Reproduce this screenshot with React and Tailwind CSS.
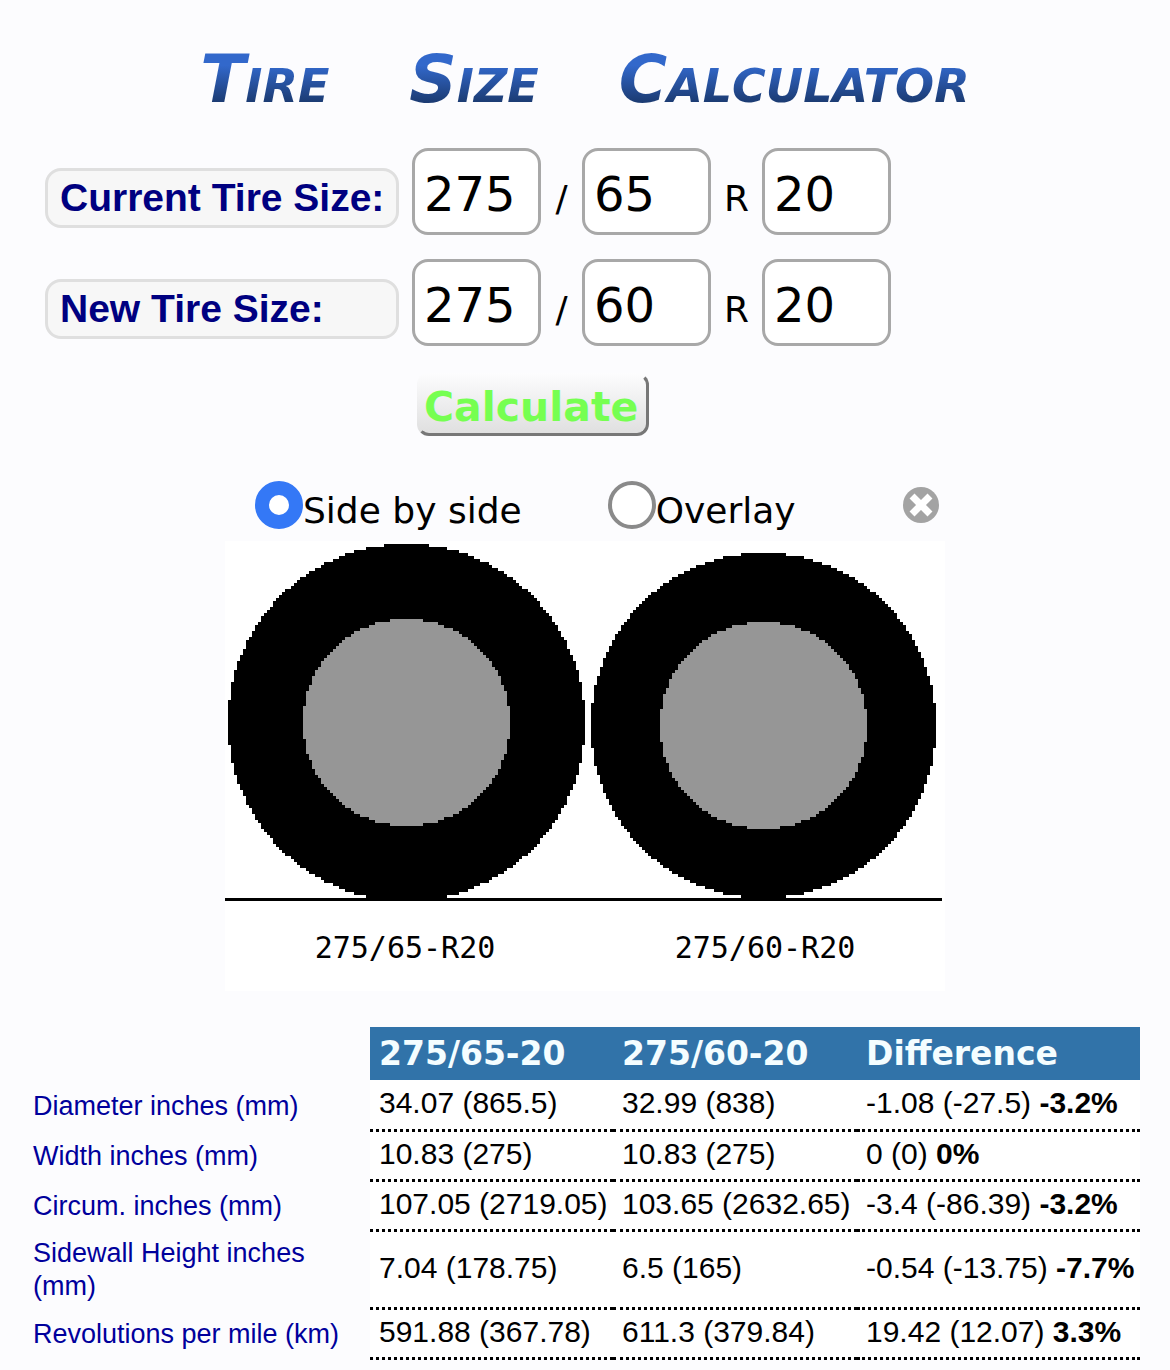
import React, { useState } from 'react';

const SIZES = [
  { id: 'current', label: 'Current Tire Size:', width: '275', ratio: '65', rim: '20' },
  { id: 'new', label: 'New Tire Size:', width: '275', ratio: '60', rim: '20' },
];

const ROWS = [
  { label: 'Diameter inches (mm)', a: '34.07 (865.5)', b: '32.99 (838)', diff: '-1.08 (-27.5)', pct: '-3.2%' },
  { label: 'Width inches (mm)', a: '10.83 (275)', b: '10.83 (275)', diff: '0 (0)', pct: '0%' },
  { label: 'Circum. inches (mm)', a: '107.05 (2719.05)', b: '103.65 (2632.65)', diff: '-3.4 (-86.39)', pct: '-3.2%' },
  { label: 'Sidewall Height inches (mm)', a: '7.04 (178.75)', b: '6.5 (165)', diff: '-0.54 (-13.75)', pct: '-7.7%' },
  { label: 'Revolutions per mile (km)', a: '591.88 (367.78)', b: '611.3 (379.84)', diff: '19.42 (12.07)', pct: '3.3%' },
];

// Scanline circle on a whole-unit grid, gives the stepped edge
function discPath(cx, cy, r) {
  const limit = (r + 0.5) * (r + 0.5);
  let d = '';
  for (let dy = -r; dy <= r; dy++) {
    const half = Math.floor(Math.sqrt(limit - dy * dy));
    d += `M${cx - half} ${cy + dy}h${half * 2 + 1}v1h${-(half * 2 + 1)}z`;
  }
  return d;
}

function Tire({ cx, cy, r, rim }) {
  return (
    <g shapeRendering="crispEdges">
      <path d={discPath(cx, cy, r)} fill="#000" />
      <path d={discPath(cx, cy, rim)} fill="#969696" />
    </g>
  );
}

function TireDrawing({ overlay }) {
  return (
    <svg viewBox="0 0 240 150" className="block w-full bg-white" role="img" aria-label="Tire comparison">
      <Tire cx={overlay ? 120 : 60} cy={60} r={59} rim={34} />
      <g opacity={overlay ? 0.6 : 1}>
        <Tire cx={overlay ? 120 : 179} cy={61} r={57} rim={34} />
      </g>
      <rect x="0" y="119" width="239" height="1" fill="#000" shapeRendering="crispEdges" />
      <g fontSize="10" textAnchor="middle" className="font-['DejaVu_Sans_Mono',monospace]">
        <text x="60" y="139">275/65-R20</text>
        <text x="180" y="139">275/60-R20</text>
      </g>
    </svg>
  );
}

function SizeInput({ label, value }) {
  return (
    <input
      type="text"
      inputMode="numeric"
      aria-label={label}
      defaultValue={value}
      className="h-[87px] w-[129px] rounded-2xl border-3 border-[#a8a8a8] bg-white px-[9px] pt-1 text-5xl text-black"
    />
  );
}

function SizeRow({ id, label, width, ratio, rim }) {
  return (
    <div role="group" aria-labelledby={id} className="flex items-baseline">
      <span
        id={id}
        className="mr-[13px] w-[354px] rounded-2xl border-3 border-[#dfdfdf] bg-[#f7f7f7] px-3 font-['Liberation_Sans',Arial,sans-serif] text-[39px] leading-[54px] font-bold whitespace-nowrap text-[#000080]"
      >
        {label}
      </span>
      <SizeInput label="Width" value={width} />
      <span className="w-[41px] text-center text-4xl">/</span>
      <SizeInput label="Aspect ratio" value={ratio} />
      <span className="w-[51px] text-center text-4xl">R</span>
      <SizeInput label="Rim" value={rim} />
    </div>
  );
}

function ViewOption({ label, checked, onChange }) {
  return (
    <label className="flex items-start text-4xl leading-[60px]">
      <input
        type="radio"
        name="view"
        checked={checked}
        onChange={onChange}
        className="size-12 appearance-none rounded-full border-4 border-[#8a8a8a] bg-white checked:border-14 checked:border-[#3478f6]"
      />
      {label}
    </label>
  );
}

function ValueCell({ children }) {
  return <td className="border-b-3 border-dotted border-black bg-white pb-1 pl-[9px]">{children}</td>;
}

export default function App() {
  const [view, setView] = useState('side');
  const [open, setOpen] = useState(true);

  return (
    <main className="min-h-screen bg-[#fcfcfe] px-[30px] pt-[44px] font-['DejaVu_Sans',Verdana,sans-serif] text-black">
      <h1 className="flex justify-center gap-20 bg-linear-to-b from-[#3268cb] from-30% to-[#1c3c74] to-80% bg-clip-text text-[66px] leading-[72px] font-bold text-transparent italic [font-variant-caps:small-caps]">
        <span>Tire</span>
        <span>Size</span>
        <span>Calculator</span>
      </h1>

      <form className="mt-8 flex flex-col items-start gap-6 pl-[15px]" onSubmit={(e) => e.preventDefault()}>
        {SIZES.map((size) => (
          <SizeRow key={size.id} {...size} />
        ))}
        <button
          type="submit"
          className="mt-[3px] ml-[372px] h-[63px] rounded-xl border-3 border-t-transparent border-r-[#777] border-b-[#777] border-l-transparent bg-linear-to-b from-[#fdfdfe] to-[#dedede] bg-origin-border pt-1 pr-2 pl-1 text-[41px] leading-[50px] font-bold text-[#76ff51]"
        >
          Calculate
        </button>
      </form>

      {open && (
        <section className="mx-auto mt-[45px] max-w-[720px]">
          <div className="flex items-start pl-[30px]">
            <ViewOption label="Side by side" checked={view === 'side'} onChange={() => setView('side')} />
            <div className="w-[86px]" />
            <ViewOption label="Overlay" checked={view === 'overlay'} onChange={() => setView('overlay')} />
            <button type="button" aria-label="Close" onClick={() => setOpen(false)} className="mt-[5px] mr-[5px] ml-auto">
              <svg viewBox="0 0 38 38" className="size-[38px]">
                <circle cx="19" cy="19" r="18" fill="#a3a3a3" />
                <path d="M12.5 12.5l13 13M25.5 12.5l-13 13" stroke="#fff" strokeWidth="7" strokeLinecap="square" />
              </svg>
            </button>
          </div>
          <TireDrawing overlay={view === 'overlay'} />
        </section>
      )}

      <table className="mt-[36px] w-full table-fixed border-collapse text-left font-['Liberation_Sans',Arial,sans-serif] text-[30px] leading-[33px]">
        <colgroup>
          <col className="w-[340px]" />
          <col className="w-[243px]" />
          <col className="w-[244px]" />
          <col />
        </colgroup>
        <thead>
          <tr className="h-[53px] font-['DejaVu_Sans',Verdana,sans-serif] text-[33px] text-[#f4fdff]">
            <td />
            <th className="bg-[#3173a9] pl-[9px]">275/65-20</th>
            <th className="bg-[#3173a9] pl-[9px]">275/60-20</th>
            <th className="bg-[#3173a9] pl-[9px]">Difference</th>
          </tr>
        </thead>
        <tbody className="whitespace-nowrap">
          {ROWS.map((row) => (
            <tr key={row.label} className="h-[50px]">
              <th className="pt-[7px] pb-[5px] pl-[3px] text-[27px] font-normal whitespace-normal text-[#00009c]">
                {row.label}
              </th>
              <ValueCell>{row.a}</ValueCell>
              <ValueCell>{row.b}</ValueCell>
              <ValueCell>
                {row.diff} <b>{row.pct}</b>
              </ValueCell>
            </tr>
          ))}
        </tbody>
      </table>
    </main>
  );
}
